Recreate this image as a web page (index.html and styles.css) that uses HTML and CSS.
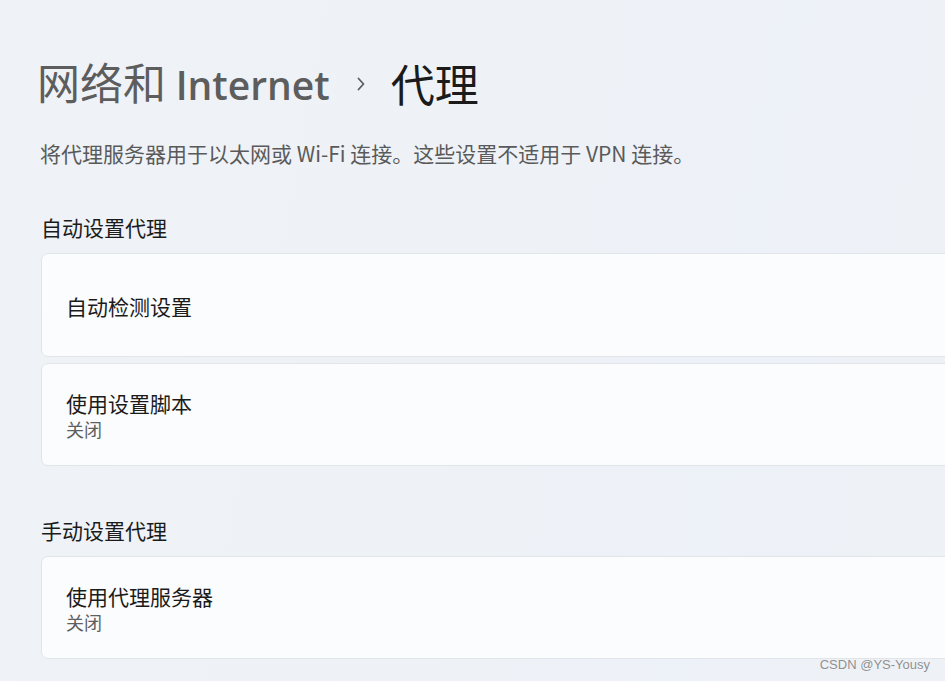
FILE: index.html
```html
<!DOCTYPE html>
<html lang="zh-CN">
<head>
<meta charset="utf-8">
<title>代理</title>
<link rel="stylesheet" href="styles.css">
</head>
<body>
<main class="page">
  <h1 class="crumb">
    <span class="crumb-parent">网络和 <span class="latin-strong">Internet</span></span>
    <svg class="chev" width="10" height="16" viewBox="0 0 10 16"><path d="M2.5 2.5 L7.5 8 L2.5 13.5" fill="none" stroke="#5e5e5e" stroke-width="1.8" stroke-linecap="round" stroke-linejoin="round"/></svg>
    <span class="crumb-current">代理</span>
  </h1>
  <p class="desc">将代理服务器用于以太网或 Wi-Fi 连接。这些设置不适用于 VPN 连接。</p>

  <h2 class="section-title first">自动设置代理</h2>
  <div class="cards">
    <div class="card card-tall">
      <div class="card-title">自动检测设置</div>
    </div>
    <div class="card">
      <div class="card-title">使用设置脚本</div>
      <div class="card-sub">关闭</div>
    </div>
  </div>

  <h2 class="section-title second">手动设置代理</h2>
  <div class="cards">
    <div class="card">
      <div class="card-title">使用代理服务器</div>
      <div class="card-sub">关闭</div>
    </div>
  </div>
</main>
<div class="watermark">CSDN @YS-Yousy</div>
</body>
</html>
```

FILE: styles.css
```css
html, body {
  margin: 0;
  padding: 0;
  width: 945px;
  height: 681px;
  overflow: hidden;
}
body {
  background: linear-gradient(100deg, #eff2f6 0%, #eef2f7 55%, #edf1f8 75%, #eef2f6 100%);
  font-family: "Noto Sans CJK SC", "Noto Sans", sans-serif;
  color: #1b1b1b;
  position: relative;
}
.page {
  display: flex;
  flex-direction: column;
  padding: 55px 0 0 37px;
  width: 1000px;
}
.crumb {
  margin: 0;
  display: flex;
  align-items: center;
  height: 56px;
  font-size: 43px;
  font-weight: 400;
  line-height: 56px;
  white-space: nowrap;
}
.crumb-parent {
  color: #5d5d5d;
}
.latin-strong {
  font-family: "Open Sans", "Noto Sans", sans-serif;
  font-weight: 600;
  font-size: 39px;
}
.chev {
  margin: 0 25px 0 26px;
  position: relative;
  top: 1px;
}
.crumb-current {
  color: #1b1b1b;
  font-size: 44px;
}
.desc {
  margin: 28px 0 0 3px;
  font-size: 21px;
  line-height: 28px;
  color: #5a5a5a;
  white-space: nowrap;
}
.section-title {
  margin: 0 0 0 4px;
  font-size: 21px;
  font-weight: 400;
  line-height: 28px;
  color: #1b1b1b;
  white-space: nowrap;
}
.section-title.first {
  margin-top: 46px;
}
.section-title.second {
  margin-top: 50px;
}
.cards {
  display: flex;
  flex-direction: column;
  gap: 6px;
  margin: 12px 0 0 4px;
}
.card {
  box-sizing: border-box;
  height: 103px;
  background: #fbfcfd;
  border: 1.5px solid #e2e5e8;
  border-radius: 7px;
  padding: 0 24px 0 24px;
  display: flex;
  flex-direction: column;
  justify-content: center;
}
.card-tall {
  height: 104px;
  padding-top: 2px;
}
.card-title {
  font-size: 21px;
  line-height: 28px;
  color: #1b1b1b;
  white-space: nowrap;
}
.card-sub {
  font-size: 18px;
  line-height: 24px;
  color: #5f5f5f;
  white-space: nowrap;
}
.watermark {
  position: absolute;
  right: 15px;
  bottom: 9px;
  font-family: "Liberation Sans", Arial, sans-serif;
  font-size: 13px;
  color: #8f8f8f;
  text-shadow: 0 0 1px rgba(255,255,255,0.8);
}
```
